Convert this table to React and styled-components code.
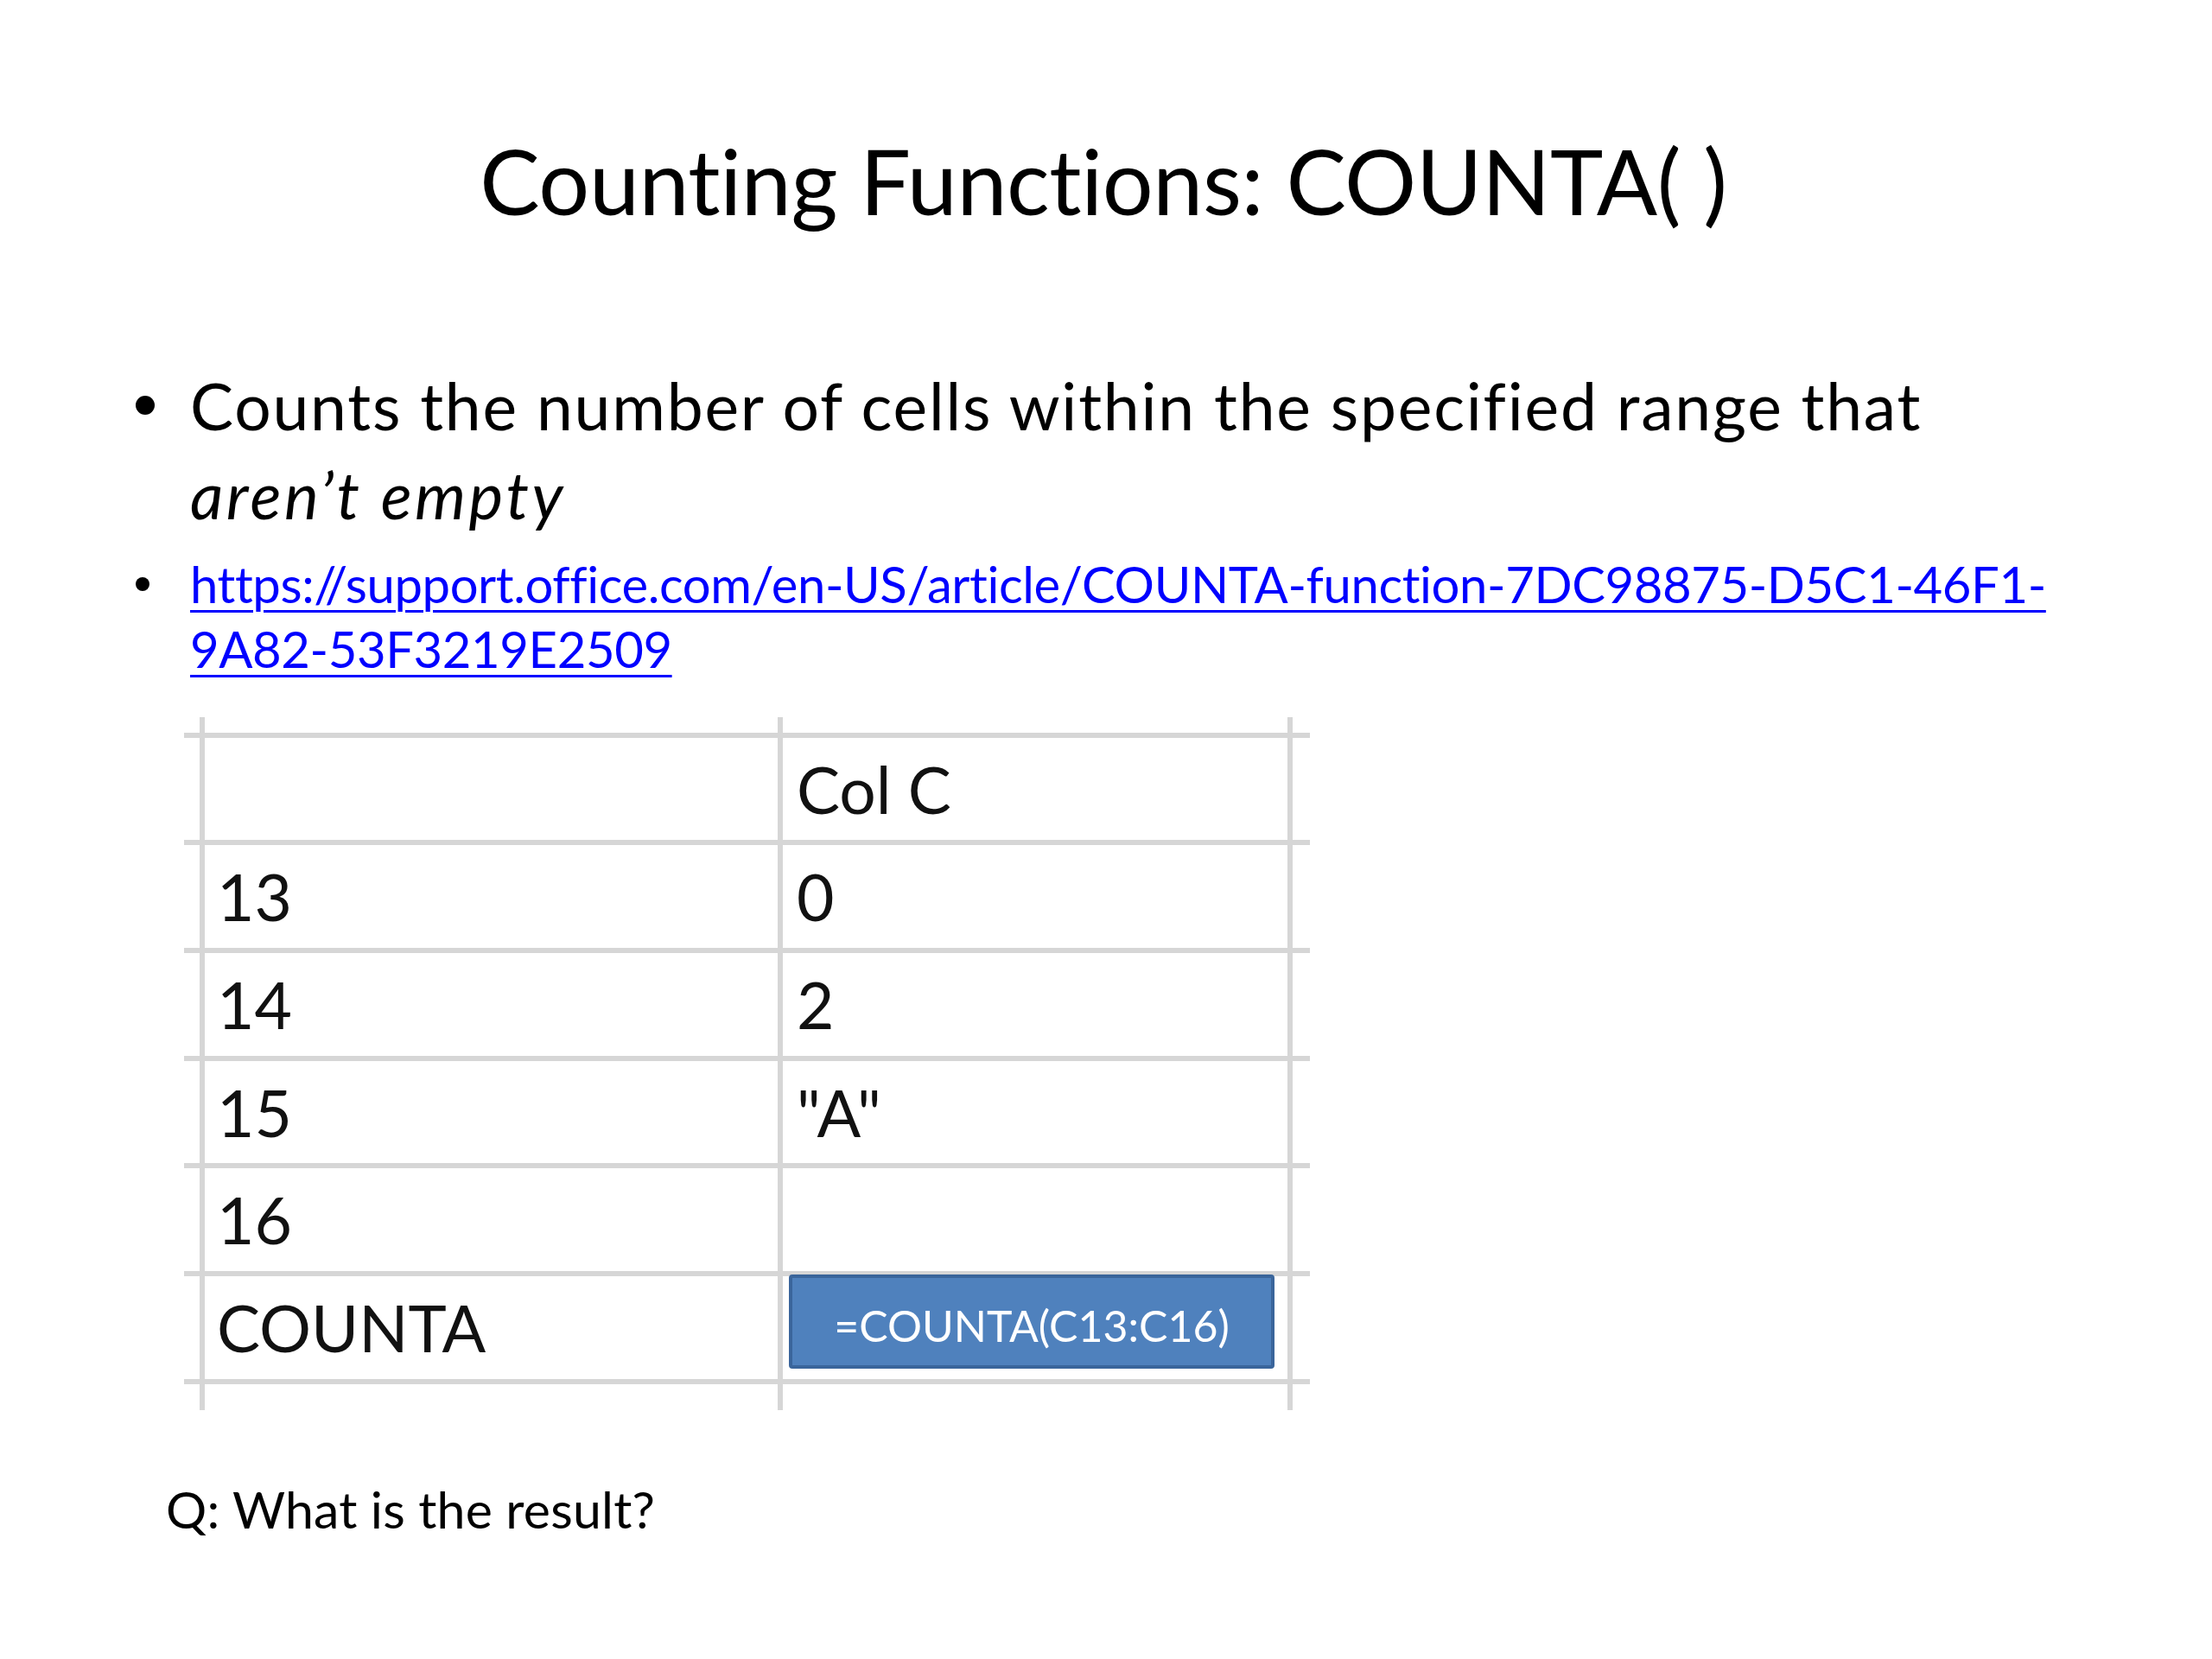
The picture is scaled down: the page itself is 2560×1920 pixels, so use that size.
import React from 'react'
import styled, { createGlobalStyle } from 'styled-components'

const GlobalStyle = createGlobalStyle`
  html, body {
    margin: 0;
    padding: 0;
    background: #ffffff;
  }
  body {
    font-family: "Lato", "Open Sans", sans-serif;
    font-variant-ligatures: none;
    color: #000;
  }
`

const Slide = styled.div`
  width: 2560px;
  height: 1920px;
  background: #ffffff;
  display: flex;
  flex-direction: column;
  overflow: hidden;
`

const Title = styled.h1`
  margin: 147px 0 0;
  font-size: 104px;
  font-weight: 400;
  line-height: 1.2;
  letter-spacing: -0.4px;
  text-align: center;
  padding-right: 6px;
`

const BulletList = styled.ul`
  list-style: none;
  margin: 146px 0 0;
  padding: 0 0 0 157px;
  display: flex;
  flex-direction: column;
  gap: 14px;
`

const Item = styled.li`
  display: grid;
  grid-template-columns: 63px 2180px;
  font-size: ${p => p.$size}px;
  line-height: ${p => p.$lh}px;
  letter-spacing: ${p => p.$ls}px;
`

const Dot = styled.span`
  width: ${p => p.$d}px;
  height: ${p => p.$d}px;
  margin-top: ${p => p.$top}px;
  border-radius: 50%;
  background: #000;
`

const Emph = styled.em`
  letter-spacing: 3.5px;
`

const Link = styled.a`
  color: #0000ff;
  text-decoration: underline;
  text-decoration-thickness: 3px;
  text-underline-offset: 8px;
`

const Sheet = styled.div`
  margin: 42px 0 0 213px;
  width: 1303px;
  display: grid;
  grid-template-columns: 18px 663px 584px 20px;
  grid-template-rows: 18px repeat(6, 118.67px) 30px;
  gap: 6px;
  background: #d6d6d6;
`

const Cell = styled.div`
  background: #ffffff;
  font-size: 75px;
  line-height: 110px;
  padding: 4px 0 0 ${p => (p.$col ? 16 : 14)}px;
  color: #111;
  white-space: nowrap;
  display: flex;
`

const FormulaBox = styled.div`
  flex: 1;
  box-sizing: border-box;
  margin: -6px 15px 12px -9px;
  border: 4px solid #3a659b;
  border-radius: 4px;
  background: #4f81bd;
  color: #ffffff;
  font-size: 50px;
  line-height: 1;
  display: flex;
  align-items: center;
  justify-content: center;
  padding-top: 10px;
`

const Question = styled.p`
  margin: 80px 0 0 192px;
  font-size: 59px;
  line-height: 1.2;
  letter-spacing: 0.2px;
`

const rows = [
  ['', 'Col C'],
  ['13', '0'],
  ['14', '2'],
  ['15', '"A"'],
  ['16', ''],
  ['COUNTA', null],
]

export default function App() {
  return (
    <>
      <GlobalStyle />
      <Slide>
        <Title>Counting Functions: COUNTA( )</Title>
        <BulletList>
          <Item $size={75} $lh={103} $ls={1.8}>
            <Dot $d={22} $top={40} />
            <span>
              Counts the number of cells within the specified range that <Emph>aren’t empty</Emph>
            </span>
          </Item>
          <Item $size={58} $lh={75} $ls={-0.4}>
            <Dot $d={16} $top={30} />
            <span>
              <Link href="#">
                https://support.office.com/en-US/article/COUNTA-function-7DC98875-D5C1-46F1-9A82-53F3219E2509
              </Link>
            </span>
          </Item>
        </BulletList>

        <Sheet>
          <Cell /><Cell /><Cell /><Cell />
          {rows.map((r, i) => (
            <React.Fragment key={i}>
              <Cell />
              <Cell>{r[0]}</Cell>
              <Cell $col>
                {r[1] === null ? <FormulaBox>=COUNTA(C13:C16)</FormulaBox> : r[1]}
              </Cell>
              <Cell />
            </React.Fragment>
          ))}
          <Cell /><Cell /><Cell /><Cell />
        </Sheet>

        <Question>Q: What is the result?</Question>
      </Slide>
    </>
  )
}
